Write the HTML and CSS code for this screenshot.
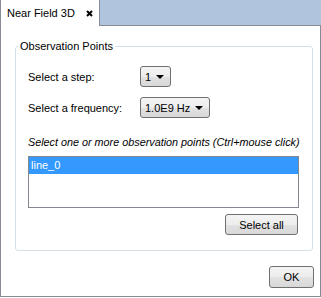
FILE: index.html
```html
<!DOCTYPE html>
<html lang="en">
<head>
    <meta charset="UTF-8">
    <title>Near Field 3D</title>
    <link rel="stylesheet" href="styles.css">
</head>
<body>

    <div class="tabbar">
        <div class="tab">
            <span>Near Field 3D</span>
            <svg class="close" width="7" height="7" viewBox="0 0 7 7">
                <path d="M1 1 L6 6 M6 1 L1 6" stroke="#000" stroke-width="2"/>
            </svg>
        </div>
        <div class="tab-fill"></div>
    </div>

    <div class="panel">
        <fieldset class="group">
            <legend>Observation Points</legend>

            <div class="row">
                <span class="label">Select a step:</span>
                <div class="combo combo-step">
                    <span>1</span>
                    <span class="arrow"></span>
                </div>
            </div>

            <div class="row">
                <span class="label">Select a frequency:</span>
                <div class="combo combo-freq">
                    <span>1.0E9 Hz</span>
                    <span class="arrow"></span>
                </div>
            </div>

            <p class="hint">Select one or more observation points (Ctrl+mouse click)</p>

            <div class="listbox">
                <div class="item selected">line_0</div>
            </div>

            <div class="actions">
                <button class="btn btn-select">Select all</button>
            </div>
        </fieldset>

        <div class="footer">
            <button class="btn btn-ok">OK</button>
        </div>
    </div>

</body>
</html>
```

FILE: styles.css
```css
body {
    margin: 0;
    padding: 0;
    width: 321px;
    height: 298px;
    background: #fff;
    color: #000;
    font-family: 'Liberation Sans', Arial, sans-serif;
    font-size: 11px;
    overflow: hidden;
}

.tabbar {
    display: flex;
    height: 26px;
}

.tab {
    width: 100px;
    height: 26px;
    box-sizing: border-box;
    background: #fff;
    border-left: 1px solid #898c95;
    border-right: 1px solid #898c95;
    display: flex;
    align-items: center;
    padding-left: 6px;
}

.tab .close {
    margin-left: 11px;
    margin-top: 1px;
}

.tab-fill {
    flex: 1;
    background: #b0c4de;
    border-bottom: 1px solid #898c95;
}

.panel {
    height: 270px;
    border-left: 1px solid #898c95;
    border-right: 1px solid #898c95;
    border-bottom: 1px solid #898c95;
    display: flex;
    flex-direction: column;
}

.group {
    margin: 14px 7px 0 14px;
    padding: 13px 13px 15px 12px;
    border: 1px solid #d5dfe5;
    border-radius: 3px;
    min-width: 0;
}

.group legend {
    padding: 0 2px;
    margin-left: -10px;
    line-height: 13px;
}

.row {
    display: flex;
    align-items: center;
    height: 21px;
    margin-bottom: 10px;
}

.label {
    width: 112px;
}

.combo {
    height: 21px;
    box-sizing: border-box;
    border: 1px solid #707070;
    border-radius: 3px;
    background: linear-gradient(#f4f4f4 0%, #ededed 50%, #e2e2e2 51%, #d8d8d8 100%);
    display: flex;
    align-items: center;
    padding-left: 4px;
}

.combo-step {
    width: 31px;
}

.combo-freq {
    width: 70px;
}

.arrow {
    margin-left: auto;
    margin-right: 6px;
    width: 0;
    height: 0;
    border-left: 4px solid transparent;
    border-right: 4px solid transparent;
    border-top: 4px solid #000;
}

.hint {
    margin: 18px 0 7px 0;
    font-style: italic;
    font-size: 10.8px;
    line-height: 13px;
    white-space: nowrap;
}

.listbox {
    height: 50px;
    border: 1px solid #828790;
}

.item {
    height: 17px;
    line-height: 17px;
    padding-left: 2px;
}

.item.selected {
    background: #3399ff;
    color: #fff;
}

.actions {
    display: flex;
    justify-content: flex-end;
    margin-top: 6px;
    padding-right: 1px;
}

.btn {
    font-family: 'Liberation Sans', Arial, sans-serif;
    font-size: 11px;
    color: #000;
    border: 1px solid #707070;
    border-radius: 3px;
    background: linear-gradient(#f4f4f4 0%, #ededed 50%, #e2e2e2 51%, #d8d8d8 100%);
    padding: 0;
}

.btn-select {
    width: 73px;
    height: 21px;
}

.footer {
    display: flex;
    justify-content: flex-end;
    margin-top: 15px;
    padding-right: 6px;
}

.btn-ok {
    width: 45px;
    height: 22px;
}
```
